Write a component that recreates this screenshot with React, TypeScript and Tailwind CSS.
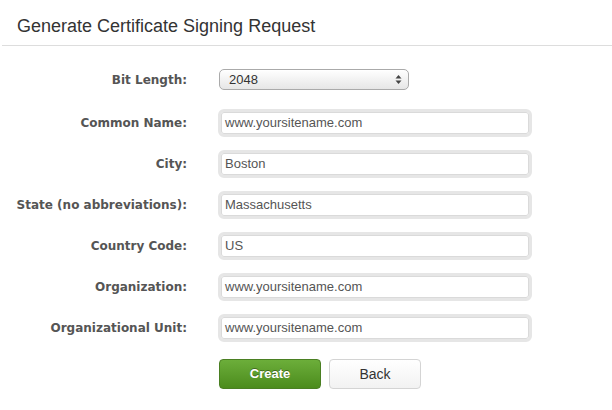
import React from "react";

const labelCls =
  "w-[187px] shrink-0 text-right text-[12px] font-bold text-[#555] [font-family:'DejaVu_Sans',Verdana,sans-serif]";

const fields: { label: string; value: string }[] = [
  { label: "Common Name:", value: "www.yoursitename.com" },
  { label: "City:", value: "Boston" },
  { label: "State (no abbreviations):", value: "Massachusetts" },
  { label: "Country Code:", value: "US" },
  { label: "Organization:", value: "www.yoursitename.com" },
  { label: "Organizational Unit:", value: "www.yoursitename.com" },
];

export default function App() {
  return (
    <div className="w-[612px] h-[410px] bg-white overflow-hidden [font-family:'Liberation_Sans',Arial,sans-serif]">
      <div className="h-[45px] pl-[17px] pt-[15px] text-[18px] leading-[22px] text-[#333]">
        Generate Certificate Signing Request
      </div>
      <div className="ml-[2px] h-px bg-[#dddddd]" />
      <div className="pt-[23px] flex flex-col">
        <div className="flex items-center h-[21px]">
          <div className={labelCls}>Bit Length:</div>
          <div className="ml-[32px] w-[190px] h-[21px] rounded-[5px] border border-[#aaaaaa] bg-gradient-to-b from-white to-[#e6e6e6] flex items-center justify-between pl-[9px] pr-[6px] text-[13px] text-[#333] shadow-[inset_0_1px_0_#fff]">
            <span>2048</span>
            <svg width="7" height="11" viewBox="0 0 7 11">
              <path d="M3.5 1 L6.5 4.5 L0.5 4.5 Z" fill="#444" />
              <path d="M3.5 10 L6.5 6.5 L0.5 6.5 Z" fill="#444" />
            </svg>
          </div>
        </div>
        <div className="flex flex-col gap-[13px] mt-[19px]">
          {fields.map((f) => (
            <div key={f.label} className="flex items-center h-[28px]">
              <div className={labelCls}>{f.label}</div>
              <div className="ml-[31px] w-[314px] h-[28px] rounded-[6px] border-[3px] border-[#e6e6e6] bg-white flex items-center pl-[4px] text-[13px] text-[#555] shadow-[inset_0_0_0_1px_#dadada]">
                {f.value}
              </div>
            </div>
          ))}
        </div>
        <div className="flex gap-[8px] mt-[17px] ml-[219px]">
          <div className="w-[102px] h-[30px] rounded-[4px] border border-[#4a7f22] bg-gradient-to-b from-[#6cae3a] to-[#4c8c1c] flex items-center justify-center text-[13px] font-bold text-white [text-shadow:0_-1px_0_rgba(0,0,0,0.35)]">
            Create
          </div>
          <div className="w-[92px] h-[30px] rounded-[4px] border border-[#d4d4d4] bg-gradient-to-b from-white to-[#f2f2f2] flex items-center justify-center text-[14px] text-[#333]">
            Back
          </div>
        </div>
      </div>
    </div>
  );
}
